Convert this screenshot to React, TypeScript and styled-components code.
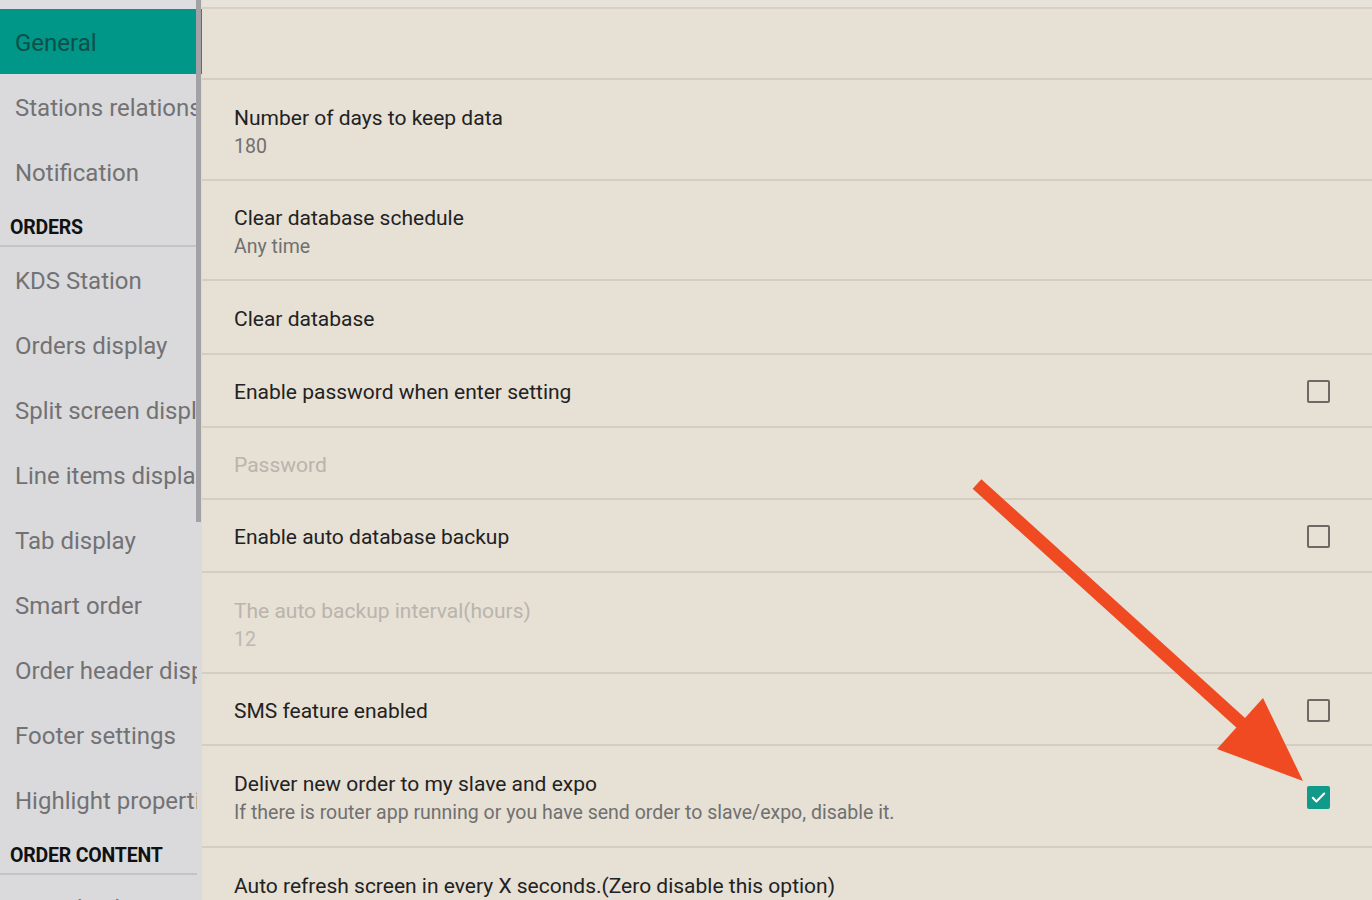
import React from "react";
import styled, { createGlobalStyle } from "styled-components";

const Global = createGlobalStyle`
  html, body { margin: 0; padding: 0; height: 900px; overflow: hidden; }
  body { font-family: Roboto, "Noto Sans", "Liberation Sans", sans-serif; background: #e6e0d5; }
  #root { height: 900px; }
`;

const Page = styled.div`
  position: relative;
  display: flex;
  width: 1372px;
  height: 900px;
  overflow: hidden;
  background: #e6e0d5;
`;

const Sidebar = styled.nav`
  position: relative;
  flex: 0 0 202px;
  display: flex;
  flex-direction: column;
  background: #dadadc;
  overflow: hidden;
`;

const TopBand = styled.div`
  height: 9px;
  flex: 0 0 9px;
  background: #dedee0;
`;

const NavItem = styled.div<{ $active?: boolean }>`
  height: 65px;
  flex: 0 0 65px;
  box-sizing: border-box;
  padding: 3px 0 0 15px;
  display: flex;
  align-items: center;
  white-space: nowrap;
  overflow: hidden;
  width: ${(p) => (p.$active ? "202px" : "197px")};
  font-size: 24px;
  color: ${(p) => (p.$active ? "#0f4f48" : "#727274")};
  background: ${(p) => (p.$active ? "#009688" : "transparent")};
`;

const Section = styled.div<{ $h: number }>`
  height: ${(p) => p.$h}px;
  flex: 0 0 ${(p) => p.$h}px;
  box-sizing: border-box;
  padding: 6px 0 0 10px;
  display: flex;
  align-items: center;
  font-size: 19.5px;
  font-weight: 700;
  letter-spacing: -0.2px;
  color: #111;
  border-bottom: 2px solid #c4c4c7;
  width: 197px;
  white-space: nowrap;
`;

const Scrollbar = styled.div`
  position: absolute;
  right: 1px;
  top: 0;
  width: 5px;
  height: 522px;
  background: #a2a2a6;
`;

const Main = styled.main`
  flex: 1;
  display: flex;
  flex-direction: column;
`;

const Row = styled.div<{ $h: number }>`
  height: ${(p) => p.$h}px;
  flex: 0 0 ${(p) => p.$h}px;
  box-sizing: border-box;
  border-bottom: 2px solid #d3cdc2;
  display: flex;
  align-items: center;
  padding: 0 42px 0 32px;
`;

const TopStrip = styled.div`
  height: 9px;
  flex: 0 0 9px;
  box-sizing: border-box;
  background: #e8e3da;
  border-bottom: 2px solid #d6d0c5;
`;

const Texts = styled.div`
  flex: 1;
  display: flex;
  flex-direction: column;
  gap: 4px;
  padding-top: 4px;
`;

const Title = styled.div<{ $disabled?: boolean }>`
  font-size: 21px;
  color: ${(p) => (p.$disabled ? "#b9b4ac" : "#222")};
  line-height: 25px;
  white-space: nowrap;
`;

const Sub = styled.div<{ $disabled?: boolean }>`
  font-size: 19.5px;
  color: ${(p) => (p.$disabled ? "#bdb8b0" : "#707070")};
  line-height: 23px;
  white-space: nowrap;
`;

const Box = styled.div<{ $checked?: boolean }>`
  width: 23px;
  height: 23px;
  box-sizing: border-box;
  border-radius: 2px;
  border: ${(p) => (p.$checked ? "none" : "2px solid #6d6964")};
  background: ${(p) => (p.$checked ? "#0f9a8a" : "transparent")};
  display: flex;
  align-items: center;
  justify-content: center;
  margin-top: 2px;
`;

const Arrow = styled.svg`
  position: absolute;
  left: 0;
  top: 0;
  pointer-events: none;
`;

type Setting = {
  title: string;
  sub?: string;
  h: number;
  box?: "off" | "on";
  disabled?: boolean;
};

const settings: Setting[] = [
  { title: "Number of days to keep data", sub: "180", h: 101 },
  { title: "Clear database schedule", sub: "Any time", h: 100 },
  { title: "Clear database", h: 74 },
  { title: "Enable password when enter setting", h: 73, box: "off" },
  { title: "Password", h: 72, disabled: true },
  { title: "Enable auto database backup", h: 73, box: "off" },
  { title: "The auto backup interval(hours)", sub: "12", h: 101, disabled: true },
  { title: "SMS feature enabled", h: 72, box: "off" },
  {
    title: "Deliver new order to my slave and expo",
    sub: "If there is router app running or you have send order to slave/expo, disable it.",
    h: 102,
    box: "on",
  },
  { title: "Auto refresh screen in every X seconds.(Zero disable this option)", h: 74 },
];

const navTop = ["Stations relations", "Notification"];
const navOrders = [
  "KDS Station",
  "Orders display",
  "Split screen display",
  "Line items display",
  "Tab display",
  "Smart order",
  "Order header display",
  "Footer settings",
  "Highlight properties",
];

export default function App() {
  return (
    <Page>
      <Global />
      <Sidebar>
        <TopBand />
        <NavItem $active>General</NavItem>
        {navTop.map((n) => (
          <NavItem key={n}>{n}</NavItem>
        ))}
        <Section $h={43}>ORDERS</Section>
        {navOrders.map((n) => (
          <NavItem key={n}>{n}</NavItem>
        ))}
        <Section $h={43}>ORDER CONTENT</Section>
        <NavItem>Item display</NavItem>
        <Scrollbar />
      </Sidebar>
      <Main>
        <TopStrip />
        <Row $h={71} />
        {settings.map((s) => (
          <Row key={s.title} $h={s.h}>
            <Texts>
              <Title $disabled={s.disabled}>{s.title}</Title>
              {s.sub && <Sub $disabled={s.disabled}>{s.sub}</Sub>}
            </Texts>
            {s.box && (
              <Box $checked={s.box === "on"}>
                {s.box === "on" && (
                  <svg width="17" height="17" viewBox="0 0 24 24">
                    <path d="M4 12.5l5 5L20 6.5" fill="none" stroke="#fff" strokeWidth="3" strokeLinecap="round" strokeLinejoin="round" />
                  </svg>
                )}
              </Box>
            )}
          </Row>
        ))}
      </Main>
      <Arrow width="1372" height="900" viewBox="0 0 1372 900">
        <line x1="977" y1="484" x2="1252" y2="733" stroke="#ef4a22" strokeWidth="13" />
        <polygon points="1303,781 1217,749 1263,698" fill="#ef4a22" />
      </Arrow>
    </Page>
  );
}
